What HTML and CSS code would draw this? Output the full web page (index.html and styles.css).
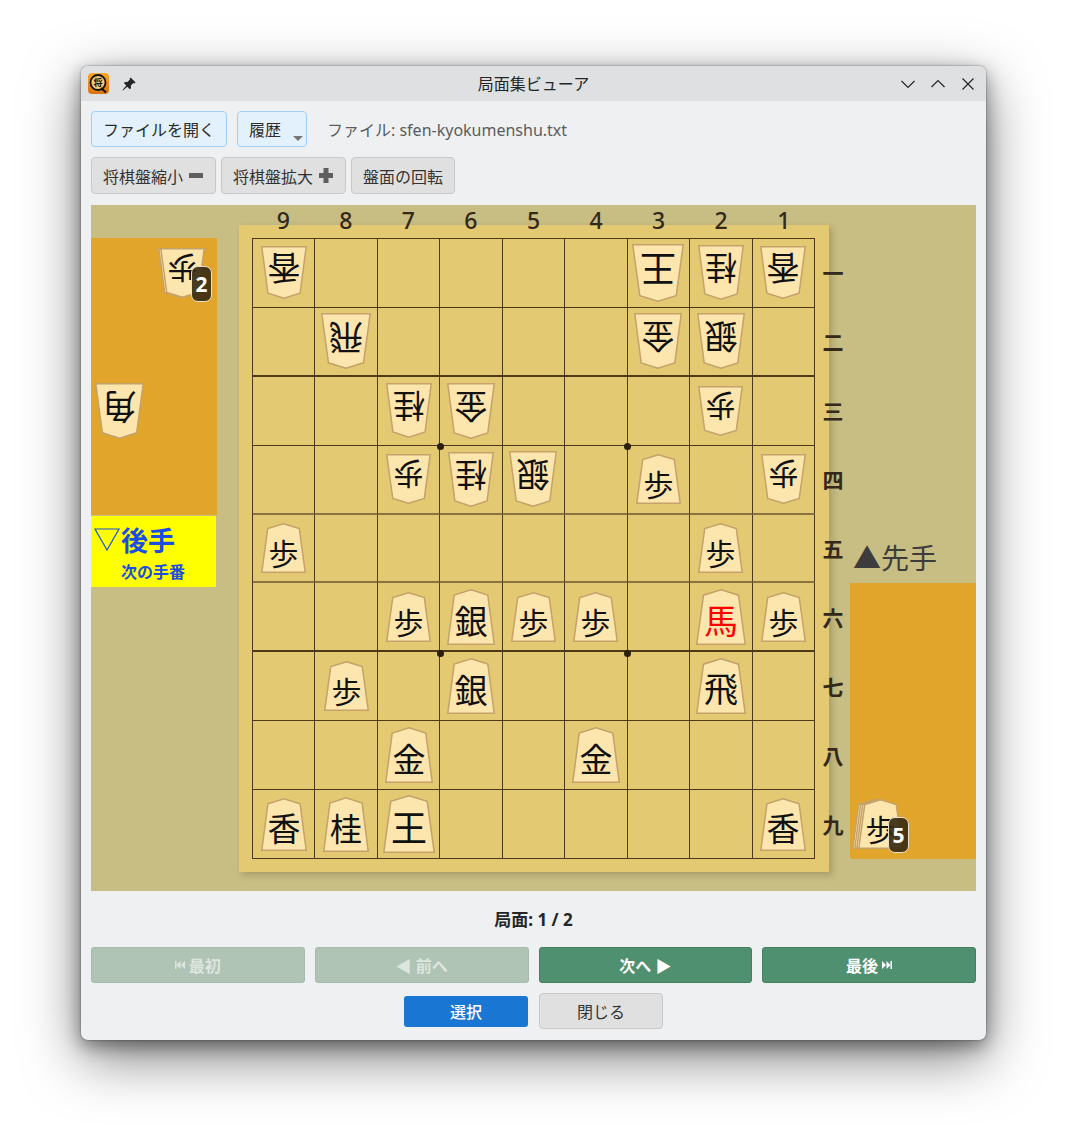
FILE: index.html
```html
<!DOCTYPE html>
<html lang="ja">
<head>
    <meta charset="UTF-8">
    <title>局面集ビューア</title>
    <link rel="stylesheet" href="styles.css">
</head>
<body>
    <div class="window">
        <!-- Title bar -->
        <div class="titlebar">
            <svg class="app-icon" viewBox="0 0 21 21" width="21" height="21">
                <defs>
                    <linearGradient id="iconFill" x1="0" y1="0" x2="0" y2="1">
                        <stop offset="0" stop-color="#f7a928"/>
                        <stop offset="1" stop-color="#d9720c"/>
                    </linearGradient>
                </defs>
                <rect width="21" height="21" rx="4" fill="url(#iconFill)"/>
                <circle cx="10" cy="9.500" r="7.500" fill="#f5c870" stroke="#111" stroke-width="1.800"/>
                <path d="M13 15l5 4.500" stroke="#111" stroke-width="2"/>
                <text class="app-icon-text" x="10" y="13" text-anchor="middle">将</text>
            </svg>
            <svg class="pin-icon" viewBox="0 0 16 16" width="16" height="16">
                <path d="M9.6 1.4l5 5-1.2 1-1-.4-2.6 2.6.2 2.4-1.2 1.2-2.5-2.5L2 14.4l-.4-.4 3.7-4.4-2.4-2.5L4 5.9l2.4.2L9 3.5l-.4-1z" fill="#232629"/>
            </svg>
            <span class="title-text">局面集ビューア</span>
            <div class="window-controls">
                <svg viewBox="0 0 16 16" width="16" height="16"><path d="M1.5 5l6.5 6.5L14.500 5" class="ctl"/></svg>
                <svg viewBox="0 0 16 16" width="16" height="16"><path d="M1.500 11L8 4.500 14.500 11" class="ctl"/></svg>
                <svg viewBox="0 0 16 16" width="16" height="16"><path d="M2.500 2.500l11 11M13.500 2.500l-11 11" class="ctl"/></svg>
            </div>
        </div>

        <div class="content">
            <!-- Toolbars -->
            <div class="toolbar toolbar-file">
                <button class="btn btn-light btn-open">ファイルを開く</button>
                <button class="btn btn-light btn-history">履歴<span class="caret"></span></button>
                <span class="file-name">ファイル: sfen-kyokumenshu.txt</span>
            </div>
            <div class="toolbar toolbar-board">
                <button class="btn btn-grey btn-zoom">将棋盤縮小
                    <svg viewBox="0 0 14 15" width="14" height="15"><rect y="5" width="14" height="5" fill="#5e5e5e"/></svg>
                </button>
                <button class="btn btn-grey btn-zoom">将棋盤拡大
                    <svg viewBox="0 0 14 15" width="14" height="15"><path d="M0 5h4.500V0h5v5H14v5H9.500v5h-5v-5H0z" fill="#5e5e5e"/></svg>
                </button>
                <button class="btn btn-grey">盤面の回転</button>
            </div>

            <!-- Board area -->
            <div class="board-area">
                <div class="side side-gote">
                    <div class="komadai komadai-gote">
                        <div class="hand hand-gote-fu" data-piece="歩" data-gote="1" data-layers="2"><span class="count">2</span></div>
                        <div class="hand hand-gote-kaku" data-piece="角" data-gote="1"></div>
                    </div>
                    <div class="turn-label">
                        <div class="turn-name"><svg viewBox="0 0 26 24" width="26" height="24"><path d="M1 2h24L13 23z" fill="none" stroke="#1a4de0" stroke-width="1.200"/></svg>後手</div>
                        <div class="turn-note">次の手番</div>
                    </div>
                </div>

                <div class="board">
                    <div class="file-labels" id="fileLabels"></div>
                    <div class="board-main">
                        <div class="grid" id="grid">
                            <span class="star star-a"></span>
                            <span class="star star-b"></span>
                            <span class="star star-c"></span>
                            <span class="star star-d"></span>
                        </div>
                        <div class="rank-labels" id="rankLabels"></div>
                    </div>
                </div>

                <div class="side side-sente">
                    <div class="sente-name">▲先手</div>
                    <div class="komadai komadai-sente">
                        <div class="hand hand-sente-fu" data-piece="歩" data-layers="4"><span class="count">5</span></div>
                    </div>
                </div>
            </div>

            <!-- Navigation -->
            <div class="position-label">局面: 1 / 2</div>
            <div class="nav-row">
                <button class="nav-btn" disabled>
                    <svg viewBox="0 0 10 8" width="10" height="8"><path d="M0 0h1.500v8H0zM5.500 0v8L1.500 4zM10 0v8L6 4z"/></svg>
                    最初
                </button>
                <button class="nav-btn" disabled>◀ 前へ</button>
                <button class="nav-btn">次へ ▶</button>
                <button class="nav-btn">最後
                    <svg viewBox="0 0 10 8" width="10" height="8"><path d="M0 0l4 4-4 4zM4.500 0l4 4-4 4zM8.500 0H10v8H8.500z"/></svg>
                </button>
            </div>
            <div class="action-row">
                <button class="btn-select">選択</button>
                <button class="btn btn-grey btn-close">閉じる</button>
            </div>
        </div>
    </div>

    <script src="board.js"></script>
</body>
</html>
```

FILE: styles.css
```css
* {
    box-sizing: border-box;
}

body {
    margin: 0;
    height: 1136px;
    overflow: hidden;
    background-color: #fff;
    font-family: "Noto Sans", "Noto Sans CJK JP", sans-serif;
    color: #232629;
}

button {
    font-family: inherit;
}

/* Window */
.window {
    width: 905px;
    height: 974px;
    margin: 66px 0 0 81px;
    background-color: #eff0f2;
    border-radius: 7px;
    overflow: hidden;
    box-shadow: 0 0 2px rgba(0, 0, 0, 0.5), 0 6px 18px rgba(0, 0, 0, 0.4), 0 18px 56px rgba(0, 0, 0, 0.5);
}

.titlebar {
    position: relative;
    display: flex;
    align-items: center;
    height: 35px;
    padding: 0 10px 0 7px;
    background-color: #dfe0e2;
}

.app-icon-text {
    font-size: 9px;
    font-weight: 700;
    fill: #111;
}

.pin-icon {
    margin-left: 12px;
}

.title-text {
    position: absolute;
    left: 0;
    right: 0;
    top: 1px;
    text-align: center;
    font-size: 16px;
    line-height: 35px;
}

.window-controls {
    display: flex;
    gap: 14px;
    margin-left: auto;
}

.ctl {
    fill: none;
    stroke: #232629;
    stroke-width: 1.200;
}

.content {
    padding: 10px 10px 0;
}

/* Toolbars */
.toolbar {
    display: flex;
    align-items: center;
}

.toolbar-file {
    gap: 10px;
    height: 36px;
}

.toolbar-board {
    gap: 5px;
    height: 37px;
    margin-top: 10px;
}

.btn {
    height: 100%;
    padding: 0 11px;
    font-size: 16px;
    border-radius: 4px;
    color: #2b2b2b;
    white-space: nowrap;
}

.btn-light {
    background-color: #e3f1fc;
    border: 1px solid #9fd0f7;
}

.btn-open {
    width: 136px;
}

.btn-history {
    position: relative;
    width: 70px;
    text-align: left;
}

.caret {
    position: absolute;
    right: 3px;
    bottom: 5px;
    border-style: solid;
    border-width: 5px 5px 0;
    border-color: #777 transparent transparent;
}

.file-name {
    margin-left: 10px;
    font-size: 16px;
    color: #5a5c5e;
}

.btn-grey {
    display: flex;
    align-items: center;
    gap: 6px;
    background-color: #e0e0e0;
    border: 1px solid #c8c8c8;
    color: #333;
}

.btn-zoom {
    width: 125px;
}

/* Board area */
.board-area {
    display: flex;
    width: 885px;
    height: 686px;
    margin-top: 11px;
    background-color: #c8bd82;
}

.side {
    flex: none;
    width: 126px;
}

.komadai {
    position: relative;
    background-color: #e2a52c;
}

.komadai-gote {
    height: 277px;
    margin-top: 33px;
}

.turn-label {
    width: 125px;
    height: 71px;
    margin-top: 1px;
    background-color: #ff0;
    color: #1a4de0;
}

.turn-name {
    display: flex;
    align-items: center;
    gap: 1px;
    height: 46px;
    padding-left: 3px;
    font-size: 27px;
    font-weight: 700;
}

.turn-note {
    padding-left: 30px;
    font-size: 16px;
    font-weight: 700;
    line-height: 20px;
}

.side-sente {
    margin-left: 21px;
}

.sente-name {
    height: 45px;
    margin-top: 333px;
    padding: 1px 0 0 3px;
    font-size: 28px;
    line-height: 38px;
    color: #3c3c3c;
    white-space: nowrap;
}

.komadai-sente {
    height: 276px;
    border-bottom-left-radius: 3px;
}

/* Pieces in hand sit freely on the stand */
.hand {
    position: absolute;
    line-height: 0;
}

.hand-gote-fu {
    left: 67px;
    top: 10px;
}

.hand-gote-kaku {
    left: 4px;
    top: 145px;
}

.hand-sente-fu {
    left: 2px;
    top: 216px;
}

.count {
    position: absolute;
    top: 18px;
    width: 21px;
    height: 36px;
    background-color: rgba(58, 44, 18, 0.92);
    border: 1px solid #e8e0cc;
    border-radius: 7px;
    color: #fff;
    font-size: 21px;
    font-weight: 700;
    line-height: 35px;
    text-align: center;
}

.hand-gote-fu .count {
    left: 33px;
}

.hand-sente-fu .count {
    left: 36px;
}

/* Shogi board */
.board {
    flex: none;
    width: 590px;
    height: 647px;
    margin: 20px 0 0 22px;
    padding: 13px;
    background-color: #e2c972;
    box-shadow: 3px 3px 7px rgba(0, 0, 0, 0.18);
}

.file-labels {
    display: grid;
    grid-template-columns: repeat(9, 1fr);
    width: 563px;
    height: 28px;
    margin-top: -32px;
    margin-bottom: 4px;
    font-size: 23px;
    font-weight: 500;
    line-height: 28px;
    text-align: center;
    color: #33281a;
}

.board-main {
    display: flex;
    width: 600px;
}

.grid {
    position: relative;
    flex: none;
    display: grid;
    grid-template-columns: repeat(9, 1fr);
    grid-template-rows: repeat(9, 1fr);
    width: 563px;
    height: 621px;
    border-top: 1px solid #4d3a1b;
    border-left: 1px solid #4d3a1b;
}

.cell {
    display: flex;
    align-items: center;
    justify-content: center;
    min-width: 0;
    min-height: 0;
    border-right: 1px solid #4d3a1b;
    border-bottom: 1px solid #4d3a1b;
}

.cell-thick {
    border-bottom-width: 2px;
}

.cell-soft {
    border-bottom: 2px solid #8b7240;
}

.star {
    position: absolute;
    width: 7px;
    height: 7px;
    margin: -3px 0 0 -3px;
    background-color: #2a1e0c;
    border-radius: 50%;
}

.star-a { left: 33.200%; top: 33.400%; }
.star-b { left: 66.600%; top: 33.400%; }
.star-c { left: 33.200%; top: 66.800%; }
.star-d { left: 66.600%; top: 66.800%; }

.rank-labels {
    flex: none;
    display: grid;
    grid-template-rows: repeat(9, 1fr);
    width: 22px;
    height: 621px;
    margin-left: 7px;
    padding-top: 1px;
    font-size: 21px;
    font-weight: 700;
    line-height: 22px;
    text-align: center;
    color: #33281a;
    align-items: center;
}

.piece {
    flex: none;
    display: block;
    overflow: visible;
}

.piece-body {
    fill: #fde6ae;
    stroke: #c4a26a;
    stroke-width: 1.500;
}

.piece-char {
    font-family: "Noto Sans CJK JP", sans-serif;
    fill: #111;
}

.piece-red {
    fill: #f00;
}

/* Navigation */
.position-label {
    height: 30px;
    margin-top: 14px;
    font-size: 17px;
    font-weight: 700;
    line-height: 30px;
    text-align: center;
}

.nav-row {
    display: grid;
    grid-template-columns: repeat(4, 1fr);
    gap: 10px;
    width: 885px;
    height: 36px;
    margin-top: 12px;
}

.nav-btn {
    display: flex;
    align-items: center;
    justify-content: center;
    gap: 4px;
    background-color: #4e9070;
    border: 1px solid #45805f;
    border-radius: 3px;
    color: #fff;
    font-size: 16px;
    font-weight: 700;
}

.nav-btn svg {
    fill: currentColor;
}

.nav-btn:disabled {
    background-color: #b0c4b6;
    border-color: #a5bbab;
    color: #dde5df;
}

.action-row {
    display: flex;
    justify-content: center;
    align-items: center;
    gap: 11px;
    height: 36px;
    margin-top: 10px;
}

.btn-select {
    width: 124px;
    height: 31px;
    background-color: #1976d2;
    border: none;
    border-radius: 3px;
    color: #fff;
    font-size: 16px;
    font-weight: 500;
}

.btn-close {
    justify-content: center;
    width: 124px;
}
```

FILE: board.js
```js
// Piece outlines: width, height, font size and glyph height (as a share of h) of each kind
const PIECES = {
    '歩': { w: 45, h: 50, font: 30, mid: 0.57 },
    '香': { w: 46, h: 53, font: 33, mid: 0.54 },
    '桂': { w: 46, h: 55, font: 32, mid: 0.55 },
    '銀': { w: 48, h: 56, font: 33, mid: 0.56 },
    '金': { w: 48, h: 56, font: 33, mid: 0.55 },
    '角': { w: 49, h: 56, font: 34, mid: 0.55 },
    '飛': { w: 50, h: 56, font: 34, mid: 0.53 },
    '馬': { w: 50, h: 56, font: 34, mid: 0.55, red: true },
    '王': { w: 52, h: 58, font: 36, mid: 0.53 }
};

// Rows top to bottom, files 9 to 1. A "v" in front means a gote piece.
const POSITION = [
    ['v香', '', '', '', '', '', 'v王', 'v桂', 'v香'],
    ['', 'v飛', '', '', '', '', 'v金', 'v銀', ''],
    ['', '', 'v桂', 'v金', '', '', '', 'v歩', ''],
    ['', '', 'v歩', 'v桂', 'v銀', '', '歩', '', 'v歩'],
    ['歩', '', '', '', '', '', '', '歩', ''],
    ['', '', '歩', '銀', '歩', '歩', '', '馬', '歩'],
    ['', '歩', '', '銀', '', '', '', '飛', ''],
    ['', '', '金', '', '', '金', '', '', ''],
    ['香', '桂', '王', '', '', '', '', '', '香']
];

const STACK_STEP = 2;

function pieceSvg(kind, gote, layers) {
    const p = PIECES[kind];
    const extra = (layers - 1) * STACK_STEP;
    const turn = gote ? ` rotate(180 ${p.w / 2} ${p.h / 2})` : '';
    const outline = `${p.w / 2},0.8 ${p.w * 0.85},${p.h * 0.11} ${p.w - 0.8},${p.h - 0.8} 0.8,${p.h - 0.8} ${p.w * 0.15},${p.h * 0.11}`;
    let body = '';
    for (let i = 0; i < layers; i++) {
        body += `<polygon class="piece-body" points="${outline}" transform="translate(${i * STACK_STEP} 0)${turn}"/>`;
    }
    const charClass = p.red ? 'piece-char piece-red' : 'piece-char';
    body += `<text class="${charClass}" x="${p.w / 2}" y="${p.h * p.mid}" font-size="${p.font}" text-anchor="middle" dominant-baseline="central" transform="translate(${extra} 0)${turn}">${kind}</text>`;
    return `<svg class="piece" width="${p.w + extra}" height="${p.h}" viewBox="0 0 ${p.w + extra} ${p.h}">${body}</svg>`;
}

// Build the 9x9 grid
const grid = document.getElementById('grid');
POSITION.forEach((row, r) => {
    row.forEach(square => {
        const cell = document.createElement('div');
        cell.classList.add('cell');
        // Some rank lines fall between pixels in the original and look heavier
        if (r === 1 || r === 5) {
            cell.classList.add('cell-thick');
        }
        if (r === 3 || r === 4) {
            cell.classList.add('cell-soft');
        }
        if (square) {
            const gote = square[0] === 'v';
            cell.innerHTML = pieceSvg(gote ? square[1] : square, gote, 1);
        }
        grid.appendChild(cell);
    });
});

// Coordinates round the board
const fileLabels = document.getElementById('fileLabels');
'987654321'.split('').forEach(n => {
    const label = document.createElement('span');
    label.textContent = n;
    fileLabels.appendChild(label);
});

const rankLabels = document.getElementById('rankLabels');
'一二三四五六七八九'.split('').forEach(n => {
    const label = document.createElement('span');
    label.textContent = n;
    rankLabels.appendChild(label);
});

// Pieces in hand
document.querySelectorAll('.hand').forEach(hand => {
    const layers = Number(hand.dataset.layers || 1);
    hand.insertAdjacentHTML('afterbegin', pieceSvg(hand.dataset.piece, !!hand.dataset.gote, layers));
});
```
